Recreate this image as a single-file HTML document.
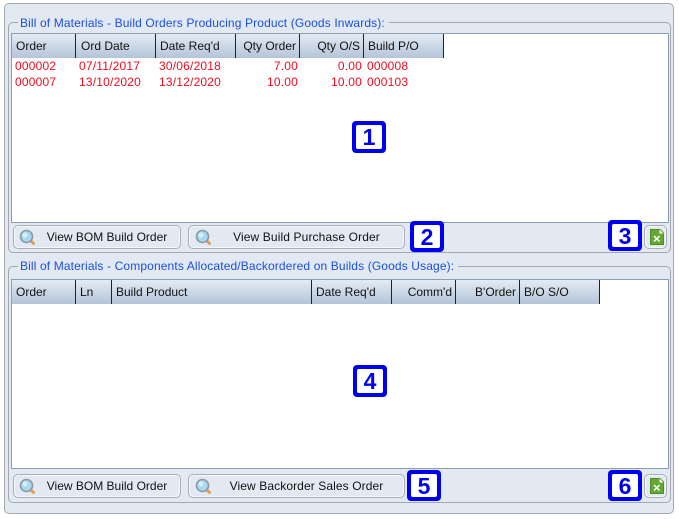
<!DOCTYPE html>
<html><head><meta charset="utf-8"><style>
html,body{margin:0;padding:0;background:#fff}
#r{position:relative;width:679px;height:519px;overflow:hidden;background:#fff;font:12px "Liberation Sans",Arial,sans-serif}
#r div,#r svg{position:absolute;box-sizing:border-box}
.outer{left:4px;top:3px;width:670px;height:511px;background:#e2e9f3;border:1px solid #a3a9ae;border-radius:5px}
.grp{border:1px solid #a3a9ae;border-radius:5px}
.lg{background:#e2e9f3;color:#1a4fe0;padding:0 4px 0 2px;height:14px;line-height:14px;white-space:nowrap;font-size:12px;letter-spacing:.13px}
.tbl{background:#fff;border:1px solid #8a9db3}
.th{height:24px;line-height:24px;color:#111;border-right:1px solid #1a2430;padding:0 5px;white-space:nowrap;background:linear-gradient(#e4ebf4,#b4c4d8)}
.th.rt{text-align:right;padding-right:3px}
.c.rt{text-align:right}
.c{color:#f00c1e;white-space:nowrap;height:16px;line-height:16px;letter-spacing:.2px}
.btn{height:24px;border:1px solid #a9aeb3;border-radius:5px;background:#e2e9f3;box-shadow:inset 0 0 0 1px #f4f7fb;color:#111;text-align:center;line-height:22px;white-space:nowrap}
.bd{background:#0000f0;border-radius:4px;color:#0000f0}
.bd div{left:4px;top:4px;right:4px;bottom:4px;background:#fff;border-radius:2px;text-align:center;font:bold 23px/24px "Liberation Sans",Arial,sans-serif}
</style></head><body><div id="r">
<div class="outer"></div>

<div class="grp" style="left:8px;top:22px;width:663px;height:231px"></div>
<div class="lg" style="left:18px;top:16px">Bill of Materials - Build Orders Producing Product (Goods Inwards):</div>
<div class="tbl" style="left:11px;top:33px;width:658px;height:190px"></div>
<div class="th" style="left:12px;top:34px;width:64px;padding-left:4px">Order</div>
<div class="th" style="left:76px;top:34px;width:80px">Ord Date</div>
<div class="th" style="left:156px;top:34px;width:80px;padding-left:4px">Date Req'd</div>
<div class="th rt" style="left:236px;top:34px;width:64px">Qty Order</div>
<div class="th rt" style="left:300px;top:34px;width:64px">Qty O/S</div>
<div class="th" style="left:364px;top:34px;width:80px;padding-left:4px">Build P/O</div>

<div class="c" style="left:15px;top:58px">000002</div>
<div class="c" style="left:79px;top:58px">07/11/2017</div>
<div class="c" style="left:159px;top:58px">30/06/2018</div>
<div class="c rt" style="left:236px;top:58px;width:62px">7.00</div>
<div class="c rt" style="left:300px;top:58px;width:62px">0.00</div>
<div class="c" style="left:367px;top:58px">000008</div>
<div class="c" style="left:15px;top:74px">000007</div>
<div class="c" style="left:79px;top:74px">13/10/2020</div>
<div class="c" style="left:159px;top:74px">13/12/2020</div>
<div class="c rt" style="left:236px;top:74px;width:62px">10.00</div>
<div class="c rt" style="left:300px;top:74px;width:62px">10.00</div>
<div class="c" style="left:367px;top:74px">000103</div>

<div class="btn" style="left:13px;top:225px;width:168px;padding-left:20px">View BOM Build Order</div>
<svg style="left:19px;top:229px" width="18" height="18" viewBox="0 0 18 18"><path d="M11.5 11.5L14.5 14.5" stroke="#d9a050" stroke-width="3" stroke-linecap="round"/><circle cx="7.5" cy="7.5" r="6" fill="#a8d8f2" stroke="#8c99a3" stroke-width="1.6"/><circle cx="6" cy="6" r="2.5" fill="#d8f0fb"/></svg>
<div class="btn" style="left:188px;top:225px;width:217px;padding-left:20px;letter-spacing:.12px">View Build Purchase Order</div>
<svg style="left:195px;top:229px" width="18" height="18" viewBox="0 0 18 18"><path d="M11.5 11.5L14.5 14.5" stroke="#d9a050" stroke-width="3" stroke-linecap="round"/><circle cx="7.5" cy="7.5" r="6" fill="#a8d8f2" stroke="#8c99a3" stroke-width="1.6"/><circle cx="6" cy="6" r="2.5" fill="#d8f0fb"/></svg>
<div class="btn" style="left:644px;top:225px;width:23px"></div>
<svg style="left:650px;top:229px" width="14" height="16" viewBox="0 0 14 16"><path d="M0.5 0.5H10L13.5 4V15.5H0.5Z" fill="#64a832" stroke="#4f8c2a"/><path d="M9.5 0.5V4.5H13.5Z" fill="#fff"/><path d="M4 7L9.5 12.5M9.5 7L4 12.5" stroke="#fff" stroke-width="1.5"/></svg>

<div class="grp" style="left:8px;top:266px;width:663px;height:237px"></div>
<div class="lg" style="left:18px;top:259px">Bill of Materials - Components Allocated/Backordered on Builds (Goods Usage):</div>
<div class="tbl" style="left:11px;top:279px;width:658px;height:190px"></div>
<div class="th" style="left:12px;top:280px;width:64px;padding-left:4px">Order</div>
<div class="th" style="left:76px;top:280px;width:36px;padding-left:4px">Ln</div>
<div class="th" style="left:112px;top:280px;width:200px;padding-left:4px">Build Product</div>
<div class="th" style="left:312px;top:280px;width:80px;padding-left:4px">Date Req'd</div>
<div class="th rt" style="left:392px;top:280px;width:64px">Comm'd</div>
<div class="th rt" style="left:456px;top:280px;width:64px">B'Order</div>
<div class="th" style="left:520px;top:280px;width:80px;padding-left:4px">B/O S/O</div>

<div class="btn" style="left:13px;top:474px;width:168px;padding-left:20px">View BOM Build Order</div>
<svg style="left:19px;top:478px" width="18" height="18" viewBox="0 0 18 18"><path d="M11.5 11.5L14.5 14.5" stroke="#d9a050" stroke-width="3" stroke-linecap="round"/><circle cx="7.5" cy="7.5" r="6" fill="#a8d8f2" stroke="#8c99a3" stroke-width="1.6"/><circle cx="6" cy="6" r="2.5" fill="#d8f0fb"/></svg>
<div class="btn" style="left:188px;top:474px;width:217px;padding-left:20px;letter-spacing:.1px">View Backorder Sales Order</div>
<svg style="left:195px;top:478px" width="18" height="18" viewBox="0 0 18 18"><path d="M11.5 11.5L14.5 14.5" stroke="#d9a050" stroke-width="3" stroke-linecap="round"/><circle cx="7.5" cy="7.5" r="6" fill="#a8d8f2" stroke="#8c99a3" stroke-width="1.6"/><circle cx="6" cy="6" r="2.5" fill="#d8f0fb"/></svg>
<div class="btn" style="left:644px;top:474px;width:23px"></div>
<svg style="left:650px;top:478px" width="14" height="16" viewBox="0 0 14 16"><path d="M0.5 0.5H10L13.5 4V15.5H0.5Z" fill="#64a832" stroke="#4f8c2a"/><path d="M9.5 0.5V4.5H13.5Z" fill="#fff"/><path d="M4 7L9.5 12.5M9.5 7L4 12.5" stroke="#fff" stroke-width="1.5"/></svg>

<div class="bd" style="left:352px;top:121px;width:34px;height:32px"><div>1</div></div>
<div class="bd" style="left:410px;top:221px;width:34px;height:31px"><div>2</div></div>
<div class="bd" style="left:608px;top:220px;width:34px;height:31px"><div>3</div></div>
<div class="bd" style="left:353px;top:365px;width:34px;height:32px"><div>4</div></div>
<div class="bd" style="left:407px;top:470px;width:34px;height:31px"><div>5</div></div>
<div class="bd" style="left:608px;top:470px;width:34px;height:31px"><div>6</div></div>
</div></body></html>
